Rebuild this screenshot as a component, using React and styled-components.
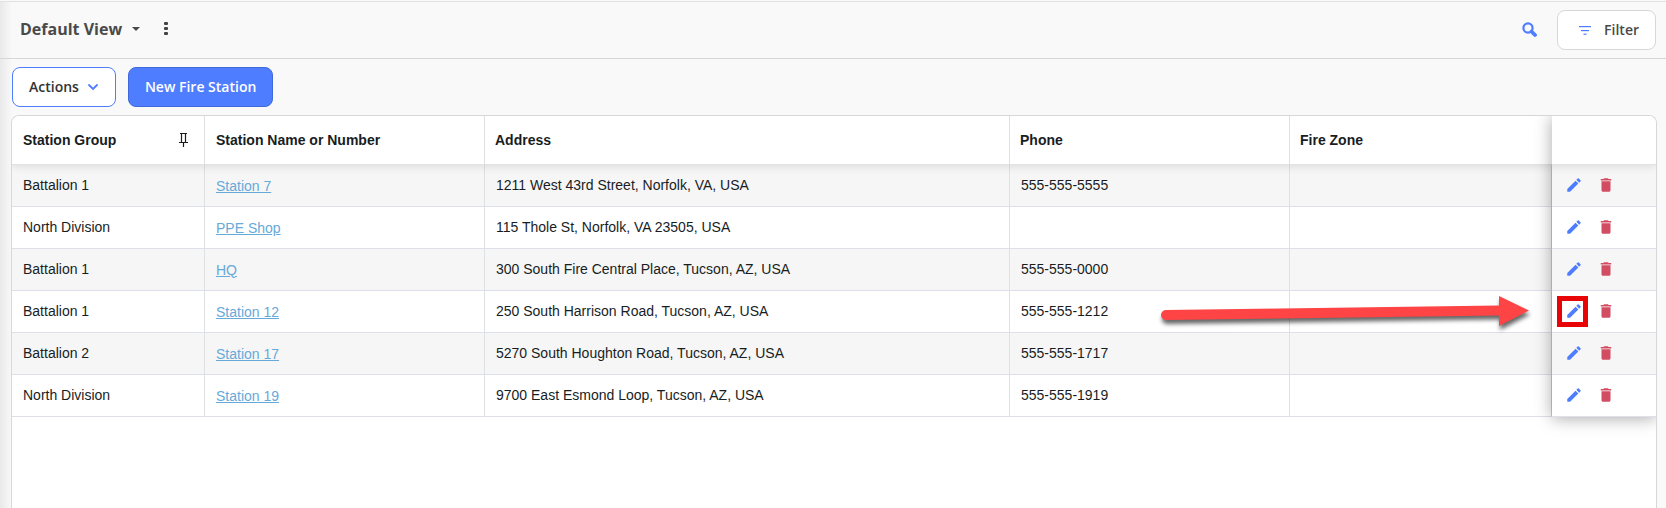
import React from 'react';
import styled, { createGlobalStyle, ThemeProvider } from 'styled-components';
import { MdDelete, MdEdit } from 'react-icons/md';

const theme = {
  blue: '#4f7dff',
  red: '#d24d62',
  link: '#67a9d9',
  page: '#f9f9f9',
  stripe: '#f6f6f6',
  line: '#d6d7d9',
  rowLine: '#dde0ea',
  heading: '"Open Sans", "Noto Sans", sans-serif',
  body: '"Liberation Sans", Arial, sans-serif',
};

const GlobalStyle = createGlobalStyle`
  *,
  *::before,
  *::after {
    box-sizing: border-box;
  }
  body {
    margin: 0;
    background-color: ${theme.page};
  }
`;

const Page = styled.main`
  min-height: 100vh;
  display: flex;
  flex-direction: column;
  border-top: 1px solid ${(props) => props.theme.page};
  background: linear-gradient(
    to right,
    #e9e9e9 0,
    ${(props) => props.theme.page} 12px
  );
`;

const ViewBar = styled.header`
  display: flex;
  align-items: center;
  height: 58px;
  padding: 0 10px 0 20px;
  border-top: 1px solid #e1e1e1;
  border-bottom: 1px solid ${(props) => props.theme.line};
`;

const IconButton = styled.button`
  display: flex;
  align-items: center;
  justify-content: center;
  padding: 0;
  border: 0;
  background: none;
  color: ${(props) => props.theme[props.$tone] || '#333'};
  cursor: pointer;
`;

const ViewTitle = styled.div`
  display: flex;
  align-items: center;
  gap: 16px;
  padding-bottom: 3px;
`;

const ViewButton = styled(IconButton)`
  gap: 10px;
  color: #4a4a4a;
  font: 700 16px/22px ${(props) => props.theme.heading};
`;

const MoreButton = styled(IconButton)`
  width: 20px;
`;

const ViewTools = styled.div`
  display: flex;
  align-items: center;
  gap: 20px;
  margin-left: auto;
`;

const Button = styled.button`
  display: flex;
  align-items: center;
  gap: 8px;
  height: 40px;
  padding: 0 16px;
  border: 1px solid ${(props) => (props.$primary ? '#4069dc' : props.theme.blue)};
  border-radius: 8px;
  background-color: ${(props) => (props.$primary ? props.theme.blue : 'white')};
  color: ${(props) => (props.$primary ? 'white' : '#333')};
  font: 600 14px/20px ${(props) => props.theme.heading};
  cursor: pointer;
  && svg {
    color: ${(props) => props.theme.blue};
  }
`;

const FilterButton = styled(Button)`
  gap: 13px;
  padding: 0 16px 0 21px;
  border-color: ${(props) => props.theme.line};
  color: #4a4a4a;
`;

const ActionBar = styled.div`
  display: flex;
  gap: 12px;
  padding: 8px 12px;
`;

const GridBox = styled.section`
  flex: 1;
  margin: 0 9px 0 11px;
  border: 1px solid ${(props) => props.theme.line};
  border-bottom: 0;
  border-radius: 8px 8px 0 0;
  background-color: white;
  overflow: hidden;
`;

const TableWrap = styled.div`
  position: relative;
  &::after {
    content: '';
    position: absolute;
    top: 0;
    right: 0;
    bottom: 0;
    width: 104px;
    box-shadow: 0 1px 16px rgba(0, 0, 0, 0.35);
    pointer-events: none;
  }
`;

const Table = styled.table`
  width: 100%;
  table-layout: fixed;
  border-collapse: separate;
  border-spacing: 0;
  color: #181d1f;
  font: 14px/20px ${(props) => props.theme.body};
  && thead {
    position: relative;
    box-shadow: 0 2px 8px rgba(0, 0, 0, 0.1);
  }
`;

const Col = styled.col`
  width: ${(props) => props.$width || 'auto'};
`;

const HeadCell = styled.th`
  height: 49px;
  padding: 0 16px 0 10px;
  border-right: 1px solid #dfe0e3;
  border-bottom: 1px solid #e2e2e2;
  background-color: white;
  text-align: left;
  font-weight: 700;
  &:nth-child(-n + 2) {
    padding-left: 11px;
  }
  &:nth-last-child(-n + 2) {
    border-right: 0;
  }
`;

const HeadLabel = styled.div`
  display: flex;
  align-items: center;
  justify-content: space-between;
`;

const Row = styled.tr`
  background-color: white;
  &:nth-child(odd) {
    background-color: ${(props) => props.theme.stripe};
  }
`;

const Cell = styled.td`
  height: 42px;
  padding: 0 11px 2px;
  border-right: 1px solid #dfe0e3;
  border-bottom: 1px solid ${(props) => props.theme.rowLine};
  &:nth-last-child(-n + 2) {
    border-right: 0;
  }
`;

const LinkCell = styled(Cell)`
  padding-bottom: 0;
`;

const ActionCell = styled(Cell)`
  position: relative;
  padding: 0 13px 2px;
  border-left: 1px solid #cfcfcf;
`;

const RowActions = styled.div`
  display: flex;
  gap: 14px;
`;

const StationLink = styled.a`
  color: ${(props) => props.theme.link};
`;

const EditButton = styled(IconButton)`
  position: relative;
  &::before {
    content: '';
    display: ${(props) => (props.$marked ? 'block' : 'none')};
    position: absolute;
    top: -6px;
    left: -8px;
    width: 31px;
    height: 31px;
    border: 5px solid #e80505;
    pointer-events: none;
  }
`;

const Arrow = styled.svg`
  position: absolute;
  z-index: 1;
  top: 0;
  right: 100%;
  filter: drop-shadow(1px 4px 2px rgba(0, 0, 0, 0.6));
  pointer-events: none;
`;

const stations = [
  { group: 'Battalion 1', name: 'Station 7', address: '1211 West 43rd Street, Norfolk, VA, USA', phone: '555-555-5555' },
  { group: 'North Division', name: 'PPE Shop', address: '115 Thole St, Norfolk, VA 23505, USA', phone: '' },
  { group: 'Battalion 1', name: 'HQ', address: '300 South Fire Central Place, Tucson, AZ, USA', phone: '555-555-0000' },
  { group: 'Battalion 1', name: 'Station 12', address: '250 South Harrison Road, Tucson, AZ, USA', phone: '555-555-1212', marked: true },
  { group: 'Battalion 2', name: 'Station 17', address: '5270 South Houghton Road, Tucson, AZ, USA', phone: '555-555-1717' },
  { group: 'North Division', name: 'Station 19', address: '9700 East Esmond Loop, Tucson, AZ, USA', phone: '555-555-1919' },
];

function StationRow({ station }) {
  return (
    <Row>
      <Cell>{station.group}</Cell>
      <LinkCell>
        <StationLink href="#">{station.name}</StationLink>
      </LinkCell>
      <Cell>{station.address}</Cell>
      <Cell>{station.phone}</Cell>
      <Cell></Cell>
      <ActionCell>
        {station.marked && (
          <Arrow width="400" height="42" viewBox="0 0 400 42" overflow="visible" aria-hidden="true">
            <path
              d="M14 19 L347 14.5 V5 L377 19.5 L347 35 V24.5 L14 29 A5 5 0 0 1 14 19Z"
              fill="#fe4444"
            />
          </Arrow>
        )}
        <RowActions>
          <EditButton $tone="blue" $marked={station.marked} aria-label={`Edit ${station.name}`}>
            <MdEdit size={18} />
          </EditButton>
          <IconButton $tone="red" aria-label={`Delete ${station.name}`}>
            <MdDelete size={18} />
          </IconButton>
        </RowActions>
      </ActionCell>
    </Row>
  );
}

function App() {
  return (
    <ThemeProvider theme={theme}>
      <GlobalStyle />
      <Page>
        <ViewBar>
          <ViewTitle>
            <ViewButton>
              Default View
              <svg width="8" height="4" viewBox="0 0 8 4">
                <path d="M0 0h8L4 4z" fill="currentColor" />
              </svg>
            </ViewButton>
            <MoreButton aria-label="More options">
              <svg width="4" height="13" viewBox="0 0 4 13" fill="#444">
                <rect width="4" height="3" rx="1" />
                <rect y="5" width="4" height="3" rx="1" />
                <rect y="10" width="4" height="3" rx="1" />
              </svg>
            </MoreButton>
          </ViewTitle>
          <ViewTools>
            <IconButton $tone="blue" aria-label="Search">
              <svg width="15" height="16" viewBox="0 0 15 16" fill="none" stroke="currentColor">
                <circle cx="6" cy="6" r="4.6" strokeWidth="2.2" />
                <path d="M9.5 9.5l3.5 3.5" strokeWidth="3.8" strokeLinecap="round" />
              </svg>
            </IconButton>
            <FilterButton>
              <svg width="12" height="9" viewBox="0 0 12 9" fill="currentColor">
                <rect width="12" height="1.2" />
                <rect x="2" y="4" width="8" height="1.2" />
                <rect x="4.5" y="7.6" width="3" height="1.2" />
              </svg>
              Filter
            </FilterButton>
          </ViewTools>
        </ViewBar>
        <ActionBar>
          <Button>
            Actions
            <svg width="12" height="8" viewBox="0 0 12 8">
              <path d="M2 2l4 4 4-4" fill="none" stroke="currentColor" strokeWidth="1.8" strokeLinecap="round" />
            </svg>
          </Button>
          <Button $primary>New Fire Station</Button>
        </ActionBar>
        <GridBox>
          <TableWrap>
            <Table>
              <colgroup>
                <Col $width="193px" />
                <Col $width="280px" />
                <Col $width="525px" />
                <Col $width="280px" />
                <Col />
                <Col $width="105px" />
              </colgroup>
              <thead>
                <tr>
                  <HeadCell>
                    <HeadLabel>
                      Station Group
                      <svg width="9" height="14" viewBox="0 0 9 14" fill="none" stroke="currentColor">
                        <path d="M1 .5h7M2.5 .5v9M6.5 .5v9M0 9.5h9M4.5 9.5V14" strokeWidth="1.2" />
                      </svg>
                    </HeadLabel>
                  </HeadCell>
                  <HeadCell>Station Name or Number</HeadCell>
                  <HeadCell>Address</HeadCell>
                  <HeadCell>Phone</HeadCell>
                  <HeadCell>Fire Zone</HeadCell>
                  <HeadCell aria-label="Row actions" />
                </tr>
              </thead>
              <tbody>
                {stations.map((station) => (
                  <StationRow key={station.name} station={station} />
                ))}
              </tbody>
            </Table>
          </TableWrap>
        </GridBox>
      </Page>
    </ThemeProvider>
  );
}

export default App;
